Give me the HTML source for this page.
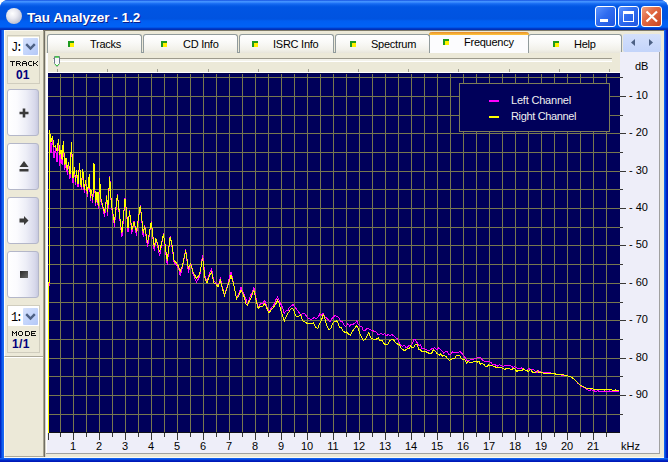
<!DOCTYPE html>
<html><head><meta charset="utf-8">
<style>
*{box-sizing:border-box}
html,body{margin:0;padding:0}
body{width:668px;height:462px;overflow:hidden;position:relative;background:#fff;font-family:"Liberation Sans",sans-serif;font-size:11px;color:#000}
.a{position:absolute}
#win{left:0;top:0;width:668px;height:462px;border-radius:8px 8px 0 0;overflow:hidden;background:#0054E3}
#title{left:0;top:0;width:668px;height:30px;background:linear-gradient(to bottom,#0A3FD6 0px,#3D8DFF 1px,#4796FF 2px,#2275F8 3px,#0B60EA 5px,#0055E3 7px,#0053E0 19px,#005EF2 21px,#0062F6 27px,#0046D8 28px,#0030B8 29px,#0030B8 30px)}
#ttext{left:27px;top:10px;font-weight:bold;font-size:13.5px;color:#fff;text-shadow:1px 1px 0 #0A1E8C;letter-spacing:0px;white-space:nowrap}
#ticon{left:6px;top:8px;width:16px;height:16px;border-radius:50%;background:radial-gradient(circle at 40% 35%,#ffffff 0%,#e8e8f0 35%,#b8bccc 80%,#9aa0b8 100%)}
.wb{top:6px;width:21px;height:21px;border:1px solid #fff;border-radius:3px;background:linear-gradient(135deg,#5C93FF 0%,#2F6CF0 45%,#1F56E0 100%)}
#frL{left:0;top:30px;width:4px;height:432px;background:linear-gradient(to right,#0019B8 0,#0033D0 1px,#0A5AEA 2px,#1A68F2 3px,#1A68F2 4px)}
#frR{left:664px;top:30px;width:4px;height:432px;background:linear-gradient(to right,#1A68F2 0,#0A5AEA 1px,#0033D0 2px,#0019B8 3px,#0019B8 4px)}
#frB{left:0;top:458px;width:668px;height:4px;background:linear-gradient(to bottom,#1A68F2 0,#0A5AEA 1px,#0033D0 2px,#0019B8 3px,#0019B8 4px)}
#client{left:4px;top:30px;width:660px;height:428px;background:#ECE9D8}
/* left panel */
#lp1{left:4px;top:30px;width:40px;height:327px;background:#ECE9D8;border-left:1px solid #FFFFFF;border-top:1px solid #F8F6EE;border-bottom:1px solid #ACA899}
#lp2{left:4px;top:357px;width:40px;height:100px;background:#ECE9D8;border-left:1px solid #FFF8E8;border-top:1px solid #FFFFFF;border-bottom:1px solid #ACA899}
.grp{left:7px;width:33px;border:1px solid #D0CDBE;background:#ECE9D8}
.combo{left:8px;width:31px;height:19px;background:#fff}
.ddb{width:15px;height:17px;background:linear-gradient(135deg,#D6E2FC 0%,#C1D3FB 60%,#B4C8F6 100%);border-radius:1px}
.ddb svg{position:absolute;left:2px;top:5px}
.ctext{font-family:"Liberation Mono",monospace;font-size:12px;letter-spacing:-2.5px;left:11px}
.btn{left:7px;width:32px;height:47px;border:1px solid #B4B7C9;border-radius:3px;background:linear-gradient(to right,#FFFFFF 0%,#FBFBFE 30%,#EDEEF7 60%,#D7D8EA 90%,#C8CAE0 100%)}
.lbl{font-weight:bold;color:#000;font-size:7px;letter-spacing:0.6px;transform:scaleY(0.9)}
.num{font-weight:bold;color:#00007C;font-size:12px}
/* right pane */
#sepV{left:43px;top:30px;width:3px;height:428px;background:linear-gradient(to right,#A8A491 0,#A8A491 1px,#716F64 1px,#716F64 2px,#D8D5C8 2px,#D8D5C8 3px)}
#sepH{left:43px;top:30px;width:621px;height:1px;background:#7F7B68}
#pane{left:45px;top:32px;width:619px;height:426px;background:#ECE9D8}
.tab{top:34px;height:19px;border:1px solid #919B9C;border-bottom:none;border-radius:3px 3px 0 0;background:linear-gradient(to bottom,#FFFFFF 0%,#FAFAF8 40%,#F2F1EA 80%,#E7E5DA 100%)}
.tab.sel{top:32px;height:21px;background:#FCFCFE;border-color:#919B9C;border-top:none}
.tab.sel:before{content:"";position:absolute;left:-1px;right:-1px;top:0;height:3px;background:linear-gradient(to bottom,#E68B2C,#FFC73C);border-radius:3px 3px 0 0}
.tico{width:6px;height:6px;background:#FFF200;border-top:2px solid #1E9A1E;border-left:2px solid #1E9A1E}
.ttx{white-space:nowrap;font-size:11px;letter-spacing:-0.25px}
#tabline{left:47px;top:52px;width:574px;height:1px;background:#919B9C}
#scr{left:623px;top:34px;width:38px;height:18px;background:linear-gradient(to bottom,#D4E0FB,#C3D4FA);border-radius:2px}
#tbar{left:48px;top:53px;width:572px;height:19px;background:#ECE9D8}
#rax{left:620px;top:52px;width:39px;height:401px;background:#EEEEF9}
#bax{left:46px;top:433px;width:613px;height:20px;background:#EEEEF9}
#rline{left:659px;top:52px;width:1px;height:402px;background:#A0A0A0}
#bline{left:46px;top:453px;width:614px;height:1px;background:#A0A0A0}
#lwhite{left:46px;top:53px;width:1px;height:400px;background:#FFFFFF}
#lwhite2{left:47px;top:53px;width:1px;height:380px;background:#FBFBFD}
#bwhite{left:4px;top:457px;width:660px;height:1px;background:#FBFAF2}
#twhite{left:48px;top:72px;width:572px;height:1px;background:#FFFFFF}
.xl{position:absolute;top:440px;width:40px;text-align:center;font-size:11px;line-height:13px}
.yl{position:absolute;left:629px;width:30px;font-size:11px;line-height:13px;white-space:nowrap}
</style></head><body>
<div id="win" class="a">
 <div id="title" class="a"></div>
 <div id="ticon" class="a"></div>
 <div id="ttext" class="a">Tau Analyzer - 1.2</div>
 <div class="a wb" style="left:595px"><div class="a" style="left:4px;top:12px;width:8px;height:3px;background:#fff"></div></div>
 <div class="a wb" style="left:618px"><div class="a" style="left:4px;top:4px;width:11px;height:11px;border:1px solid #fff;border-top-width:3px"></div></div>
 <div class="a wb" style="left:641px;background:linear-gradient(135deg,#F0A080 0%,#E26A44 40%,#C84522 100%)"><svg class="a" style="left:3px;top:3px" width="14" height="13"><path d="M1.5,1.5 L12,11.5 M12,1.5 L1.5,11.5" stroke="#fff" stroke-width="2.2"/></svg></div>
 <div id="frL" class="a"></div>
 <div id="frR" class="a"></div>
 <div id="frB" class="a"></div>
 <div id="client" class="a"></div>

 <!-- left panel -->
 <div id="lp1" class="a"></div>
 <div id="lp2" class="a"></div>
 <div class="a grp" style="top:35px;height:49px"></div>
 <div class="a combo" style="top:37px"></div>
 <div class="a ctext" style="top:42px;line-height:12px">J:</div>
 <div class="a ddb" style="left:23px;top:38px"><svg width="11" height="8"><path d="M1.2,1.2 L5.5,5.5 L9.8,1.2" fill="none" stroke="#4D6185" stroke-width="2.4"/></svg></div>
 <div class="a num" style="left:16px;top:69px;line-height:12px">01</div>

 <div class="a btn" style="top:89px"><svg class="a" style="left:11px;top:18px" width="10" height="10"><path d="M5,0.5 V9.5 M0.5,5 H9.5" stroke="#3A3A3A" stroke-width="2.6"/></svg></div>
 <div class="a btn" style="top:143px"><svg class="a" style="left:11px;top:17px" width="10" height="11"><path d="M5,0 L9.5,6 H0.5 Z" fill="#3A3A3A"/><rect x="0.5" y="8" width="9" height="2.5" fill="#3A3A3A"/></svg></div>
 <div class="a btn" style="top:197px"><svg class="a" style="left:11px;top:18px" width="10" height="9"><path d="M0.5,2.5 H5 V0 L9.5,4.5 L5,9 V6.5 H0.5 Z" fill="#3A3A3A"/></svg></div>
 <div class="a btn" style="top:251px"><div class="a" style="left:12px;top:19px;width:8px;height:7px;background:linear-gradient(135deg,#2A2A2A,#6A6A6A)"></div></div>

 <div class="a grp" style="top:305px;height:48px"></div>
 <div class="a combo" style="top:306px;height:20px"></div>
 <div class="a ctext" style="top:312px;line-height:12px">1:</div>
 <div class="a ddb" style="left:23px;top:308px"><svg width="11" height="8"><path d="M1.2,1.2 L5.5,5.5 L9.8,1.2" fill="none" stroke="#4D6185" stroke-width="2.4"/></svg></div>
 <div class="a num" style="left:12px;top:338px;line-height:12px;letter-spacing:0.4px">1/1</div>

 <svg class="a" style="left:0;top:0" width="50" height="462" shape-rendering="crispEdges"><g fill="#101010"><rect x="10" y="61" width="5" height="1"/><rect x="12" y="62" width="1" height="1"/><rect x="12" y="63" width="1" height="1"/><rect x="12" y="64" width="1" height="1"/><rect x="12" y="65" width="1" height="1"/><rect x="16" y="61" width="4" height="1"/><rect x="16" y="62" width="1" height="1"/><rect x="20" y="62" width="1" height="1"/><rect x="16" y="63" width="4" height="1"/><rect x="16" y="64" width="1" height="1"/><rect x="19" y="64" width="1" height="1"/><rect x="16" y="65" width="1" height="1"/><rect x="20" y="65" width="1" height="1"/><rect x="23" y="61" width="3" height="1"/><rect x="22" y="62" width="1" height="1"/><rect x="26" y="62" width="1" height="1"/><rect x="22" y="63" width="5" height="1"/><rect x="22" y="64" width="1" height="1"/><rect x="26" y="64" width="1" height="1"/><rect x="22" y="65" width="1" height="1"/><rect x="26" y="65" width="1" height="1"/><rect x="29" y="61" width="3" height="1"/><rect x="28" y="62" width="1" height="1"/><rect x="28" y="63" width="1" height="1"/><rect x="28" y="64" width="1" height="1"/><rect x="29" y="65" width="3" height="1"/><rect x="33" y="61" width="1" height="1"/><rect x="37" y="61" width="1" height="1"/><rect x="33" y="62" width="1" height="1"/><rect x="36" y="62" width="1" height="1"/><rect x="33" y="63" width="3" height="1"/><rect x="33" y="64" width="1" height="1"/><rect x="36" y="64" width="1" height="1"/><rect x="33" y="65" width="1" height="1"/><rect x="37" y="65" width="1" height="1"/><rect x="12" y="331" width="1" height="1"/><rect x="16" y="331" width="1" height="1"/><rect x="12" y="332" width="2" height="1"/><rect x="15" y="332" width="2" height="1"/><rect x="12" y="333" width="1" height="1"/><rect x="14" y="333" width="1" height="1"/><rect x="16" y="333" width="1" height="1"/><rect x="12" y="334" width="1" height="1"/><rect x="16" y="334" width="1" height="1"/><rect x="12" y="335" width="1" height="1"/><rect x="16" y="335" width="1" height="1"/><rect x="19" y="331" width="3" height="1"/><rect x="18" y="332" width="1" height="1"/><rect x="22" y="332" width="1" height="1"/><rect x="18" y="333" width="1" height="1"/><rect x="22" y="333" width="1" height="1"/><rect x="18" y="334" width="1" height="1"/><rect x="22" y="334" width="1" height="1"/><rect x="19" y="335" width="3" height="1"/><rect x="25" y="331" width="4" height="1"/><rect x="25" y="332" width="1" height="1"/><rect x="29" y="332" width="1" height="1"/><rect x="25" y="333" width="1" height="1"/><rect x="29" y="333" width="1" height="1"/><rect x="25" y="334" width="1" height="1"/><rect x="29" y="334" width="1" height="1"/><rect x="25" y="335" width="4" height="1"/><rect x="31" y="331" width="5" height="1"/><rect x="31" y="332" width="1" height="1"/><rect x="31" y="333" width="4" height="1"/><rect x="31" y="334" width="1" height="1"/><rect x="31" y="335" width="5" height="1"/></g></svg>
 <!-- right pane -->
 <div id="pane" class="a"></div>
 <div id="sepV" class="a"></div>
 <div id="sepH" class="a"></div>
 <div id="tabline" class="a"></div>

 <div class="a tab" style="left:47px;width:95px"><div class="a tico" style="left:20px;top:6px"></div><div class="a ttx" style="left:42px;top:3px">Tracks</div></div>
 <div class="a tab" style="left:143px;width:95px"><div class="a tico" style="left:17px;top:6px"></div><div class="a ttx" style="left:39px;top:3px">CD Info</div></div>
 <div class="a tab" style="left:239px;width:95px"><div class="a tico" style="left:12px;top:6px"></div><div class="a ttx" style="left:33px;top:3px">ISRC Info</div></div>
 <div class="a tab" style="left:335px;width:95px"><div class="a tico" style="left:14px;top:6px"></div><div class="a ttx" style="left:35px;top:3px">Spectrum</div></div>
 <div class="a tab sel" style="left:429px;width:100px"><div class="a tico" style="left:13px;top:7px"></div><div class="a ttx" style="left:34px;top:4px">Frequency</div></div>
 <div class="a tab" style="left:528px;width:94px"><div class="a tico" style="left:24px;top:6px"></div><div class="a ttx" style="left:45px;top:3px">Help</div></div>
 <div id="scr" class="a"><svg class="a" style="left:0;top:0" width="38" height="18"><path d="M12,5 L8,8.5 L12,12 Z" fill="#4D6185"/><path d="M26,5 L30,8.5 L26,12 Z" fill="#4D6185"/></svg></div>

 <div id="tbar" class="a">
  <div class="a" style="left:5px;top:5px;width:559px;height:1px;background:#9D9A8C;border-radius:1px"></div>
  <div class="a" style="left:5px;top:6px;width:559px;height:2px;background:#F3F2EA"></div>
  <div class="a" style="left:5px;top:8px;width:559px;height:1px;background:#FFFFFF"></div>
  <div class="a" style="left:9px;top:16px;width:1px;height:3px;background:#A09E90"></div><div class="a" style="left:59px;top:16px;width:1px;height:3px;background:#A09E90"></div><div class="a" style="left:109px;top:16px;width:1px;height:3px;background:#A09E90"></div><div class="a" style="left:160px;top:16px;width:1px;height:3px;background:#A09E90"></div><div class="a" style="left:210px;top:16px;width:1px;height:3px;background:#A09E90"></div><div class="a" style="left:260px;top:16px;width:1px;height:3px;background:#A09E90"></div><div class="a" style="left:310px;top:16px;width:1px;height:3px;background:#A09E90"></div><div class="a" style="left:360px;top:16px;width:1px;height:3px;background:#A09E90"></div><div class="a" style="left:410px;top:16px;width:1px;height:3px;background:#A09E90"></div><div class="a" style="left:461px;top:16px;width:1px;height:3px;background:#A09E90"></div><div class="a" style="left:511px;top:16px;width:1px;height:3px;background:#A09E90"></div><div class="a" style="left:561px;top:16px;width:1px;height:3px;background:#A09E90"></div>
 </div>
 <div id="rax" class="a"></div>
 <div id="bax" class="a"></div>
 <div id="rline" class="a"></div>
 <div id="bline" class="a"></div>
 <div id="lwhite" class="a"></div><div id="lwhite2" class="a"></div><div id="bwhite" class="a"></div>
 <div id="twhite" class="a"></div>

 <svg class="a" style="left:0;top:0" width="668" height="462" shape-rendering="crispEdges">
  <rect x="48" y="73" width="572" height="360" fill="#00005A"/>
  <g fill="#78784F"><rect x="60" y="73" width="1" height="360"/><rect x="73" y="73" width="1" height="360"/><rect x="86" y="73" width="1" height="360"/><rect x="99" y="73" width="1" height="360"/><rect x="112" y="73" width="1" height="360"/><rect x="125" y="73" width="1" height="360"/><rect x="138" y="73" width="1" height="360"/><rect x="151" y="73" width="1" height="360"/><rect x="164" y="73" width="1" height="360"/><rect x="177" y="73" width="1" height="360"/><rect x="190" y="73" width="1" height="360"/><rect x="203" y="73" width="1" height="360"/><rect x="216" y="73" width="1" height="360"/><rect x="229" y="73" width="1" height="360"/><rect x="242" y="73" width="1" height="360"/><rect x="255" y="73" width="1" height="360"/><rect x="268" y="73" width="1" height="360"/><rect x="281" y="73" width="1" height="360"/><rect x="294" y="73" width="1" height="360"/><rect x="307" y="73" width="1" height="360"/><rect x="320" y="73" width="1" height="360"/><rect x="333" y="73" width="1" height="360"/><rect x="346" y="73" width="1" height="360"/><rect x="359" y="73" width="1" height="360"/><rect x="372" y="73" width="1" height="360"/><rect x="385" y="73" width="1" height="360"/><rect x="398" y="73" width="1" height="360"/><rect x="411" y="73" width="1" height="360"/><rect x="424" y="73" width="1" height="360"/><rect x="437" y="73" width="1" height="360"/><rect x="450" y="73" width="1" height="360"/><rect x="463" y="73" width="1" height="360"/><rect x="476" y="73" width="1" height="360"/><rect x="489" y="73" width="1" height="360"/><rect x="502" y="73" width="1" height="360"/><rect x="515" y="73" width="1" height="360"/><rect x="528" y="73" width="1" height="360"/><rect x="541" y="73" width="1" height="360"/><rect x="554" y="73" width="1" height="360"/><rect x="567" y="73" width="1" height="360"/><rect x="580" y="73" width="1" height="360"/><rect x="593" y="73" width="1" height="360"/><rect x="606" y="73" width="1" height="360"/><rect x="48" y="77" width="572" height="1"/><rect x="48" y="96" width="572" height="1"/><rect x="48" y="115" width="572" height="1"/><rect x="48" y="133" width="572" height="1"/><rect x="48" y="152" width="572" height="1"/><rect x="48" y="171" width="572" height="1"/><rect x="48" y="189" width="572" height="1"/><rect x="48" y="208" width="572" height="1"/><rect x="48" y="227" width="572" height="1"/><rect x="48" y="245" width="572" height="1"/><rect x="48" y="264" width="572" height="1"/><rect x="48" y="283" width="572" height="1"/><rect x="48" y="302" width="572" height="1"/><rect x="48" y="320" width="572" height="1"/><rect x="48" y="339" width="572" height="1"/><rect x="48" y="358" width="572" height="1"/><rect x="48" y="376" width="572" height="1"/><rect x="48" y="395" width="572" height="1"/><rect x="48" y="414" width="572" height="1"/></g>
  <rect x="48" y="73" width="572" height="1" fill="#000045"/>
  <rect x="48" y="432" width="572" height="1" fill="#101018"/>
  <g fill="#383838"><rect x="48" y="433" width="1" height="7"/><rect x="60" y="433" width="1" height="4"/><rect x="73" y="433" width="1" height="7"/><rect x="86" y="433" width="1" height="4"/><rect x="99" y="433" width="1" height="7"/><rect x="112" y="433" width="1" height="4"/><rect x="125" y="433" width="1" height="7"/><rect x="138" y="433" width="1" height="4"/><rect x="151" y="433" width="1" height="7"/><rect x="164" y="433" width="1" height="4"/><rect x="177" y="433" width="1" height="7"/><rect x="190" y="433" width="1" height="4"/><rect x="203" y="433" width="1" height="7"/><rect x="216" y="433" width="1" height="4"/><rect x="229" y="433" width="1" height="7"/><rect x="242" y="433" width="1" height="4"/><rect x="255" y="433" width="1" height="7"/><rect x="268" y="433" width="1" height="4"/><rect x="281" y="433" width="1" height="7"/><rect x="294" y="433" width="1" height="4"/><rect x="307" y="433" width="1" height="7"/><rect x="320" y="433" width="1" height="4"/><rect x="333" y="433" width="1" height="7"/><rect x="346" y="433" width="1" height="4"/><rect x="359" y="433" width="1" height="7"/><rect x="372" y="433" width="1" height="4"/><rect x="385" y="433" width="1" height="7"/><rect x="398" y="433" width="1" height="4"/><rect x="411" y="433" width="1" height="7"/><rect x="424" y="433" width="1" height="4"/><rect x="437" y="433" width="1" height="7"/><rect x="450" y="433" width="1" height="4"/><rect x="463" y="433" width="1" height="7"/><rect x="476" y="433" width="1" height="4"/><rect x="489" y="433" width="1" height="7"/><rect x="502" y="433" width="1" height="4"/><rect x="515" y="433" width="1" height="7"/><rect x="528" y="433" width="1" height="4"/><rect x="541" y="433" width="1" height="7"/><rect x="554" y="433" width="1" height="4"/><rect x="567" y="433" width="1" height="7"/><rect x="580" y="433" width="1" height="4"/><rect x="593" y="433" width="1" height="7"/><rect x="606" y="433" width="1" height="4"/><rect x="620" y="77" width="3" height="1"/><rect x="620" y="96" width="6" height="1"/><rect x="620" y="115" width="3" height="1"/><rect x="620" y="133" width="6" height="1"/><rect x="620" y="152" width="3" height="1"/><rect x="620" y="171" width="6" height="1"/><rect x="620" y="189" width="3" height="1"/><rect x="620" y="208" width="6" height="1"/><rect x="620" y="227" width="3" height="1"/><rect x="620" y="245" width="6" height="1"/><rect x="620" y="264" width="3" height="1"/><rect x="620" y="283" width="6" height="1"/><rect x="620" y="302" width="3" height="1"/><rect x="620" y="320" width="6" height="1"/><rect x="620" y="339" width="3" height="1"/><rect x="620" y="358" width="6" height="1"/><rect x="620" y="376" width="3" height="1"/><rect x="620" y="395" width="6" height="1"/><rect x="620" y="414" width="3" height="1"/></g>
 </svg>
 <svg class="a" style="left:0;top:0" width="668" height="462">
  <path d="M49.5,286.0 L49.5,132.0 L49.5,132.0 L51.0,153.3 L52.5,138.0 L54.0,157.6 L55.5,148.0 L57.0,161.8 L58.5,141.5 L59.8,165.7 L61.0,152.0 L62.1,164.7 L63.3,142.6 L64.7,170.2 L66.0,160.0 L67.2,174.6 L68.5,164.0 L70.0,179.0 L71.5,143.6 L73.0,183.2 L74.5,169.0 L75.5,184.5 L76.5,172.0 L78.0,187.0 L79.5,165.0 L81.2,190.2 L82.8,170.7 L84.2,193.2 L85.5,182.0 L87.4,196.9 L89.3,176.0 L90.4,200.5 L91.5,192.0 L92.8,203.3 L94.0,165.3 L95.5,206.4 L97.0,194.0 L98.3,208.7 L99.7,180.4 L100.8,201.5 L102.3,205.8 L103.8,212.0 L104.5,217.0 L106.0,204.3 L106.8,195.2 L107.6,216.0 L109.1,189.0 L109.8,176.3 L110.6,195.0 L111.8,208.8 L113.6,219.5 L114.4,226.8 L116.7,202.8 L117.4,193.7 L118.9,210.4 L120.5,226.3 L122.0,236.6 L125.0,198.3 L126.5,213.4 L127.3,222.5 L128.0,232.0 L129.5,209.6 L131.8,233.6 L134.1,221.0 L136.4,235.8 L140.2,205.0 L141.7,219.5 L143.2,236.6 L144.7,224.8 L146.2,237.6 L147.5,246.9 L149.0,237.3 L151.3,220.7 L152.8,237.3 L154.3,251.4 L155.8,238.0 L157.4,244.9 L159.6,256.0 L163.4,233.5 L164.9,244.9 L167.2,265.0 L170.2,235.8 L172.5,249.4 L174.0,262.3 L176.3,264.6 L178.6,268.4 L180.1,275.7 L182.4,267.6 L185.7,249.5 L188.4,272.6 L190.7,263.0 L193.0,273.7 L196.5,282.4 L199.7,276.1 L202.6,254.9 L205.2,277.5 L206.9,281.8 L209.5,273.2 L211.6,269.0 L213.8,280.8 L215.9,282.9 L218.1,286.1 L220.3,277.6 L222.4,287.4 L224.6,294.8 L226.2,288.9 L227.8,284.8 L229.5,276.7 L231.1,272.2 L232.9,280.2 L234.7,289.9 L236.5,298.0 L238.7,294.0 L240.9,287.3 L242.5,291.4 L244.2,294.9 L245.8,298.8 L247.4,304.5 L249.0,300.3 L250.7,294.8 L252.3,292.7 L253.9,287.3 L256.1,298.7 L258.2,307.7 L259.8,304.7 L261.4,303.2 L263.1,303.3 L264.7,300.3 L266.9,306.7 L269.0,312.0 L272.2,306.7 L274.0,304.6 L275.9,299.7 L277.7,297.1 L280.0,302.5 L282.1,306.6 L284.3,313.3 L286.0,310.8 L287.8,310.9 L289.5,307.3 L291.3,305.8 L293.0,304.6 L294.6,306.5 L296.2,308.7 L297.9,310.8 L299.5,313.3 L301.1,315.4 L302.8,313.2 L304.4,313.2 L306.0,315.5 L307.6,317.9 L309.2,318.5 L310.9,319.7 L312.5,318.7 L314.3,317.6 L316.1,318.5 L317.9,317.5 L319.7,314.1 L321.5,315.1 L323.3,313.3 L324.9,316.7 L326.6,318.2 L328.2,319.9 L329.8,322.0 L331.6,319.1 L333.4,317.1 L335.2,315.5 L337.0,316.3 L338.8,317.5 L340.6,321.2 L342.4,321.9 L344.2,325.6 L346.0,326.3 L347.8,323.8 L349.6,326.0 L351.4,324.3 L353.2,324.2 L355.0,323.2 L356.8,320.9 L358.4,324.8 L360.1,326.0 L361.7,326.4 L363.3,330.6 L365.0,331.1 L366.6,328.7 L368.3,328.8 L370.0,329.2 L371.6,330.6 L373.2,330.9 L374.9,331.4 L376.5,332.5 L378.1,334.6 L379.8,334.0 L381.4,333.5 L383.0,334.6 L384.7,333.7 L386.4,335.9 L388.2,334.5 L389.9,335.6 L391.6,334.6 L393.8,335.7 L396.0,337.9 L397.6,339.0 L399.2,342.3 L400.9,345.5 L402.5,346.5 L404.1,345.1 L405.8,347.1 L407.4,347.3 L409.0,345.5 L410.6,345.2 L412.2,343.9 L413.9,339.6 L415.5,340.0 L417.1,342.6 L418.8,345.7 L420.4,344.9 L422.0,348.7 L424.1,348.6 L426.3,349.3 L428.4,350.9 L430.0,350.2 L431.6,349.0 L433.3,348.3 L434.9,347.6 L436.6,349.7 L438.4,348.0 L440.1,349.2 L441.9,350.6 L443.6,353.0 L445.4,351.6 L447.2,351.4 L449.0,354.7 L450.8,354.3 L452.6,351.5 L454.4,353.0 L456.5,352.5 L458.7,352.0 L460.0,351.4 L461.6,352.9 L463.2,355.0 L464.9,357.3 L466.5,360.0 L468.1,360.5 L469.8,360.3 L471.4,359.5 L473.0,360.0 L474.8,358.2 L476.6,358.0 L478.4,357.9 L480.3,357.3 L482.2,359.7 L484.1,361.1 L486.0,361.1 L487.6,361.5 L489.2,361.2 L490.9,362.4 L492.5,364.4 L494.2,364.2 L495.9,365.2 L497.7,366.1 L499.4,364.8 L501.1,365.5 L502.8,366.6 L504.6,365.9 L506.3,365.3 L508.1,365.0 L509.8,365.5 L511.4,366.0 L513.0,367.3 L514.7,366.8 L516.3,367.6 L518.0,368.7 L519.7,368.3 L521.5,368.0 L523.2,369.5 L524.9,369.8 L526.6,370.5 L528.4,368.3 L530.1,369.5 L531.9,369.5 L533.6,369.8 L535.3,371.6 L537.0,372.3 L538.8,370.7 L540.5,372.1 L542.2,372.0 L543.9,372.6 L545.7,372.1 L547.4,372.6 L549.2,372.3 L550.9,373.0 L552.7,373.7 L554.5,373.8 L556.4,374.4 L558.2,374.6 L560.0,374.5 L561.8,375.1 L563.7,375.6 L565.5,375.8 L567.3,375.7 L569.2,376.7 L571.0,377.0 L572.7,377.7 L574.3,379.2 L576.0,381.0 L577.7,383.2 L579.3,384.1 L581.0,386.5 L583.0,387.1 L585.0,388.1 L587.0,389.7 L588.9,390.5 L590.8,389.9 L592.6,390.1 L594.5,391.0 L596.1,391.5 L597.8,390.6 L599.4,391.6 L601.0,391.4 L602.7,391.6 L604.3,391.8 L605.9,391.4 L607.6,391.7 L609.2,390.8 L610.8,391.7 L612.5,391.5 L614.1,391.8 L615.7,391.0 L617.4,391.9 L619.0,391.6" fill="none" stroke="#FF00FF" stroke-width="1" shape-rendering="crispEdges"/>
  <path d="M48.5,432.5 L48.5,282.5 L49.5,282.0 L49.5,130.0 L49.5,130.0 L51.0,142.3 L52.5,136.0 L54.0,146.6 L55.5,146.0 L57.0,150.8 L58.5,139.5 L59.8,154.7 L61.0,150.0 L62.1,159.7 L63.3,140.6 L64.7,165.2 L66.0,158.0 L67.2,169.6 L68.5,162.0 L70.0,174.0 L71.5,141.6 L73.0,178.2 L74.5,167.0 L75.5,181.5 L76.5,170.0 L78.0,184.0 L79.5,163.0 L81.2,187.2 L82.8,168.7 L84.2,190.2 L85.5,180.0 L87.4,193.9 L89.3,174.0 L90.4,197.5 L91.5,190.0 L92.8,200.3 L94.0,163.3 L95.5,203.4 L97.0,192.0 L98.3,205.7 L99.7,178.4 L100.8,198.5 L102.3,203.8 L103.8,210.0 L104.5,213.0 L106.0,202.3 L106.8,196.2 L107.6,212.0 L109.1,187.0 L109.8,177.3 L110.6,193.0 L111.8,206.8 L113.6,217.5 L114.4,222.8 L116.7,200.8 L117.4,194.7 L118.9,208.4 L120.5,224.3 L122.0,232.6 L125.0,199.3 L126.5,211.4 L127.3,220.5 L128.0,228.0 L129.5,210.6 L131.8,229.6 L134.1,222.0 L136.4,231.8 L140.2,206.0 L141.7,217.5 L143.2,232.6 L144.7,225.8 L146.2,235.6 L147.5,242.9 L149.0,235.3 L151.3,221.7 L152.8,235.3 L154.3,247.4 L155.8,239.0 L157.4,242.9 L159.6,252.0 L163.4,234.5 L164.9,242.9 L167.2,261.0 L170.2,236.8 L172.5,247.4 L174.0,260.3 L176.3,262.6 L178.6,266.4 L180.1,271.7 L182.4,265.6 L185.7,250.5 L188.4,268.6 L190.7,264.0 L193.0,271.7 L196.5,278.4 L199.7,274.1 L202.6,257.9 L205.2,279.5 L206.9,282.8 L209.5,275.2 L211.6,272.0 L213.8,282.8 L215.9,284.0 L218.1,287.1 L220.3,280.6 L222.4,288.4 L224.6,295.8 L226.2,290.2 L227.8,285.9 L229.5,280.8 L231.1,275.2 L232.9,281.6 L234.7,289.3 L236.5,299.0 L238.7,295.9 L240.9,290.3 L242.5,293.2 L244.2,296.9 L245.8,303.5 L247.4,305.5 L249.0,301.6 L250.7,299.1 L252.3,294.0 L253.9,290.3 L256.1,300.0 L258.2,308.7 L259.8,306.1 L261.4,306.5 L263.1,306.0 L264.7,303.3 L266.9,308.2 L269.0,313.0 L272.2,308.7 L274.0,306.7 L275.9,303.6 L277.7,300.1 L279.4,303.7 L281.0,311.4 L282.6,316.0 L284.3,320.9 L286.5,315.8 L288.7,312.2 L290.9,308.9 L293.0,309.0 L296.2,316.5 L298.4,316.8 L300.6,314.4 L302.7,320.9 L304.3,321.3 L305.9,322.7 L307.6,323.8 L309.2,323.0 L311.4,323.8 L313.5,323.0 L315.7,327.2 L317.9,328.4 L319.7,323.4 L321.5,320.1 L323.3,314.4 L325.1,319.2 L326.9,326.0 L328.7,329.5 L330.6,328.7 L332.5,323.8 L334.4,321.7 L336.3,320.9 L337.9,322.3 L339.6,327.4 L341.2,327.9 L342.8,330.6 L344.7,332.1 L346.6,332.0 L348.4,333.9 L350.3,334.9 L351.9,332.1 L353.6,329.5 L355.2,327.9 L356.8,325.2 L358.4,329.3 L360.1,334.2 L361.7,337.2 L363.3,340.3 L365.1,339.3 L366.9,336.6 L368.7,332.8 L370.9,337.8 L373.1,339.3 L374.8,339.8 L376.5,339.0 L378.3,338.1 L380.1,341.0 L381.9,340.0 L384.0,343.9 L386.2,344.4 L387.9,344.2 L389.5,341.1 L392.7,339.0 L394.5,341.0 L396.3,343.4 L398.1,344.4 L399.7,345.0 L401.4,348.8 L403.0,349.5 L404.6,350.9 L406.8,349.0 L409.0,348.7 L410.6,346.1 L412.2,347.8 L413.9,347.2 L415.5,344.4 L417.1,344.8 L418.8,349.3 L420.4,349.8 L422.0,352.0 L424.1,351.1 L426.3,351.9 L428.4,353.0 L430.0,353.4 L431.6,353.3 L433.3,349.8 L434.9,350.9 L437.1,353.5 L439.3,355.2 L440.9,353.8 L442.6,356.5 L444.2,355.4 L445.8,356.3 L447.6,358.7 L449.4,360.2 L451.2,359.5 L453.0,358.1 L454.8,358.4 L456.6,355.2 L458.2,355.6 L459.9,355.8 L461.5,358.8 L463.1,359.5 L464.8,359.5 L466.5,362.9 L468.1,361.6 L469.8,362.2 L471.4,362.8 L473.0,362.2 L475.1,361.0 L477.3,362.2 L478.9,361.1 L480.6,364.6 L482.2,363.2 L483.8,364.4 L485.4,366.3 L487.1,366.4 L488.7,364.8 L490.3,365.5 L492.1,365.7 L493.9,366.3 L495.7,367.1 L497.5,367.2 L499.3,367.5 L501.1,367.6 L502.8,368.3 L504.6,369.6 L506.3,368.3 L508.1,368.2 L509.8,368.7 L511.5,369.8 L513.2,368.4 L515.0,368.9 L516.7,371.6 L518.4,370.2 L520.1,370.4 L521.9,370.7 L523.6,368.9 L525.4,370.5 L527.1,370.9 L528.8,371.4 L530.6,369.6 L532.3,372.0 L534.1,372.3 L535.8,372.0 L537.5,370.6 L539.2,372.9 L541.0,372.6 L542.7,373.0 L544.4,373.0 L546.1,373.0 L547.9,373.7 L549.6,374.0 L551.4,373.3 L553.1,374.1 L554.8,373.6 L556.5,374.5 L558.2,375.0 L560.0,374.2 L561.7,374.5 L563.4,374.7 L565.4,375.4 L567.3,375.6 L569.2,376.3 L571.2,377.0 L573.6,378.7 L576.0,380.9 L577.6,382.4 L579.3,384.3 L580.9,385.8 L582.9,386.4 L584.8,387.3 L586.8,388.3 L588.7,388.8 L590.6,388.1 L592.6,389.0 L594.5,389.1 L596.5,389.5 L598.4,389.2 L600.3,389.2 L602.3,389.7 L604.2,390.1 L606.2,389.4 L608.1,389.3 L610.1,389.7 L611.9,389.9 L613.7,390.5 L615.4,390.0 L617.2,390.5 L619.0,391.0" fill="none" stroke="#FFFF00" stroke-width="1" shape-rendering="crispEdges"/>
 </svg>
 <svg class="a" style="left:0;top:0" width="668" height="462" shape-rendering="crispEdges">
  <rect x="459.5" y="83.5" width="150" height="48" fill="#00005A" stroke="#7E7E58" stroke-width="1"/>
  <rect x="489" y="100" width="10" height="2" fill="#FF00FF"/>
  <rect x="489" y="116" width="10" height="2" fill="#FFFF00"/>
 </svg>
 <div class="a" style="left:511px;top:94px;color:#F0F0F0;font-size:11px;white-space:nowrap;letter-spacing:-0.2px">Left Channel</div>
 <div class="a" style="left:511px;top:110px;color:#F0F0F0;font-size:11px;white-space:nowrap;letter-spacing:-0.35px">Right Channel</div>

 <!-- trackbar thumb -->
 <svg class="a" style="left:53px;top:55px" width="9" height="13"><path d="M1.5,1.5 H6.5 V8.5 L4,11.5 L1.5,8.5 Z" fill="#F6F6F8" stroke="#6B7A8C" stroke-width="1"/><path d="M2,2 H6" stroke="#3CC83C" stroke-width="1.5"/><path d="M2,9 L4,11 L6,9" fill="none" stroke="#3CC83C" stroke-width="1"/></svg>

 <div class="xl" style="left:53px">1</div><div class="xl" style="left:79px">2</div><div class="xl" style="left:105px">3</div><div class="xl" style="left:131px">4</div><div class="xl" style="left:157px">5</div><div class="xl" style="left:183px">6</div><div class="xl" style="left:209px">7</div><div class="xl" style="left:235px">8</div><div class="xl" style="left:261px">9</div><div class="xl" style="left:287px">10</div><div class="xl" style="left:313px">11</div><div class="xl" style="left:339px">12</div><div class="xl" style="left:365px">13</div><div class="xl" style="left:391px">14</div><div class="xl" style="left:417px">15</div><div class="xl" style="left:443px">16</div><div class="xl" style="left:469px">17</div><div class="xl" style="left:495px">18</div><div class="xl" style="left:521px">19</div><div class="xl" style="left:547px">20</div><div class="xl" style="left:573px">21</div><div class="yl" style="top:89px">- 10</div><div class="yl" style="top:126px">- 20</div><div class="yl" style="top:164px">- 30</div><div class="yl" style="top:201px">- 40</div><div class="yl" style="top:238px">- 50</div><div class="yl" style="top:276px">- 60</div><div class="yl" style="top:313px">- 70</div><div class="yl" style="top:351px">- 80</div><div class="yl" style="top:388px">- 90</div>
 <div class="a" style="left:635px;top:60px;font-size:11px;line-height:13px">dB</div>
 <div class="a" style="left:621px;top:440px;font-size:11px;line-height:13px">kHz</div>
</div>
</body></html>
